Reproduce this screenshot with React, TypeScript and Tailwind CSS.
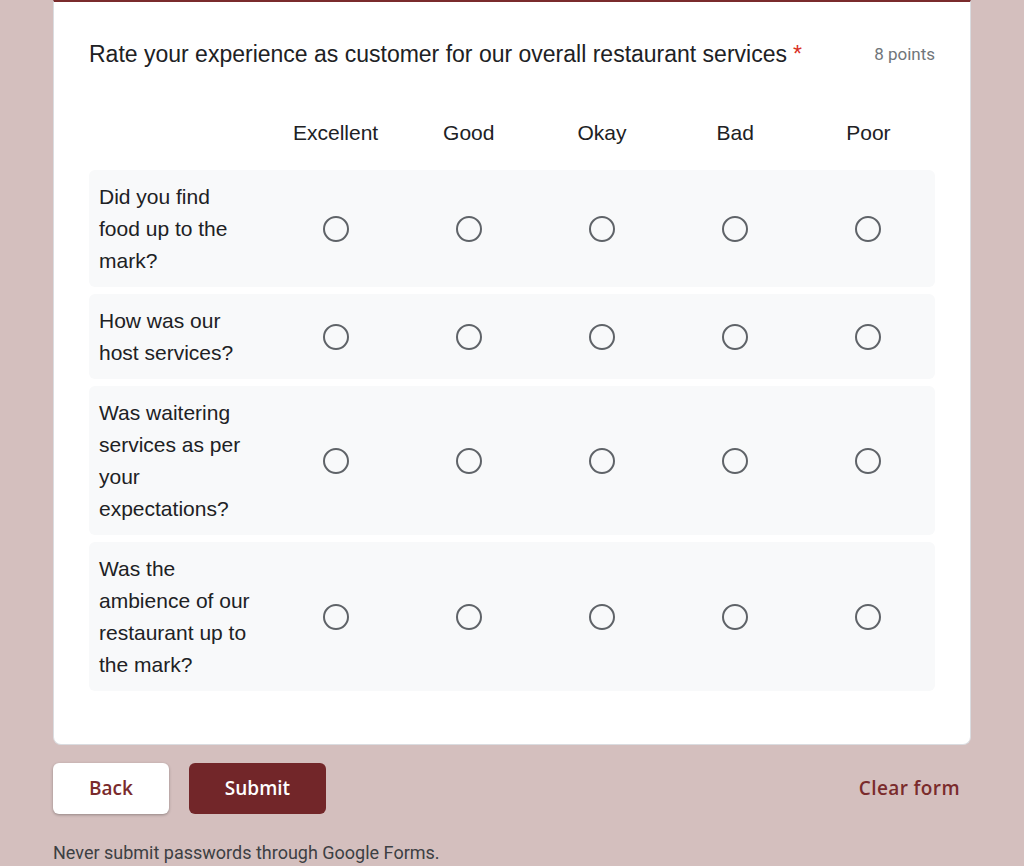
import React from 'react';

const columns = ['Excellent', 'Good', 'Okay', 'Bad', 'Poor'];

const rows = [
  'Did you find food up to the mark?',
  'How was our host services?',
  'Was waitering services as per your expectations?',
  'Was the ambience of our restaurant up to the mark?',
];

const Radio: React.FC = () => (
  <div className="w-[26px] h-[26px] rounded-full border-[2.5px] border-[#5f6368]" />
);

const App: React.FC = () => {
  return (
    <div className="min-h-[866px] bg-[#d4bfbe] px-[53px] font-['Liberation_Sans',Arial,sans-serif] text-[#202124]">
      {/* Card */}
      <div className="bg-white rounded-b-[8px] border-x border-b border-[#dadce0] border-t-2 border-t-[#7a2b2c] px-[35px] pt-[36px] pb-[53px]">
        <div className="flex items-start justify-between">
          <h2 className="text-[23px] leading-[32px]">
            Rate your experience as customer for our overall restaurant services
            <span className="text-[#d93025] ml-[6px]">*</span>
          </h2>
          <span className="text-[17px] leading-[32px] text-[#70757a] font-['Roboto',sans-serif]">8 points</span>
        </div>

        {/* Header */}
        <div className="flex items-center h-[50px] mt-[38px] mb-[12px]">
          <div className="w-[180px] shrink-0" />
          {columns.map((c) => (
            <div key={c} className="flex-1 text-center text-[21px]">
              {c}
            </div>
          ))}
        </div>

        {/* Rows */}
        <div className="flex flex-col gap-[7px]">
          {rows.map((r) => (
            <div key={r} className="flex items-center bg-[#f8f9fa] rounded-[6px] py-[10.5px]">
              <div className="w-[180px] shrink-0 pl-[10px] pr-[17px] text-[21px] leading-[32px]">{r}</div>
              {columns.map((c) => (
                <div key={c} className="flex-1 flex justify-center">
                  <Radio />
                </div>
              ))}
            </div>
          ))}
        </div>
      </div>

      {/* Actions */}
      <div className="flex items-center justify-between mt-[18px] font-['Open_Sans',sans-serif]">
        <div className="flex gap-[20px]">
          <button className="w-[116px] h-[51px] bg-white rounded-[6px] text-[#7a2b2c] text-[19px] font-semibold shadow-[0_1px_3px_rgba(0,0,0,0.3)]">
            Back
          </button>
          <button className="w-[137px] h-[51px] bg-[#722629] rounded-[6px] text-white text-[19px] font-semibold">
            Submit
          </button>
        </div>
        <button className="text-[#7a2b2c] text-[19px] font-semibold pr-[11px] tracking-[0.4px]">Clear form</button>
      </div>

      <p className="mt-[25px] text-[18px] text-[#3c4043] font-['Roboto',sans-serif]">
        Never submit passwords through Google Forms.
      </p>
    </div>
  );
};

export default App;
